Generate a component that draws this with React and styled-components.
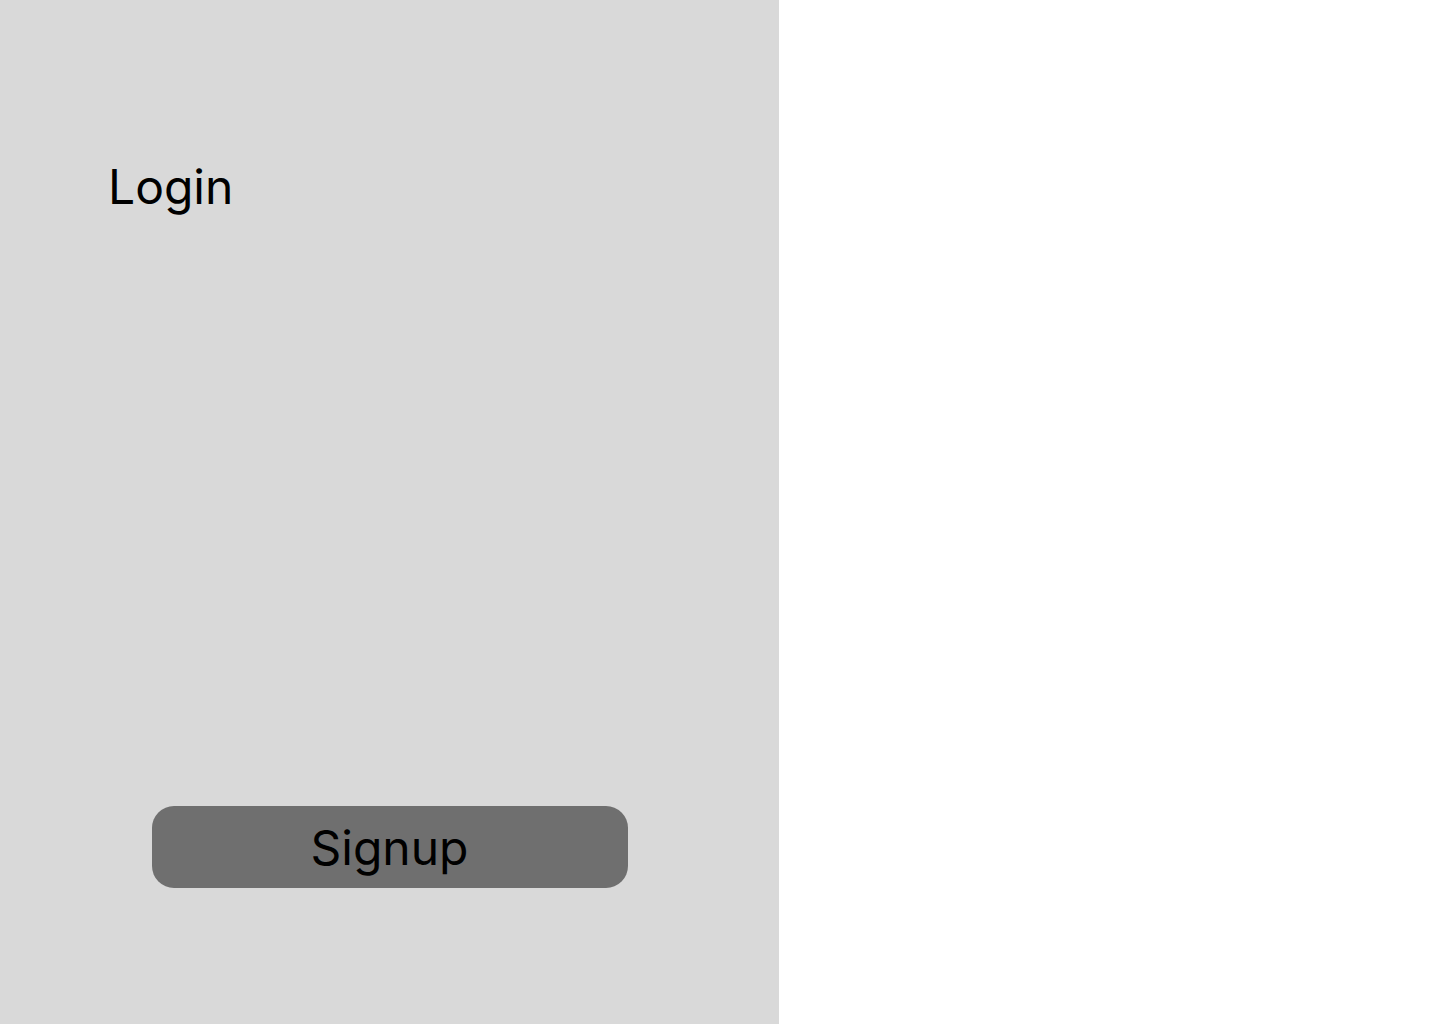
import React from 'react'
import styled, { createGlobalStyle } from 'styled-components'

const GlobalStyle = createGlobalStyle`
  * { box-sizing: border-box; }
  body {
    margin: 0;
    font-family: Inter, "Noto Sans", sans-serif;
    background: #fff;
  }
`

const Page = styled.div`
  display: flex;
  width: 100%;
  height: 100vh;
  min-height: 1024px;
  background: #ffffff;
`

const Panel = styled.section`
  display: flex;
  flex-direction: column;
  width: 779px;
  height: 100%;
  padding: 158px 0 136px;
  background: #d9d9d9;
`

const Title = styled.h1`
  margin: 0 0 0 108px;
  font-size: 48px;
  font-weight: 400;
  line-height: 58px;
  color: #000;
`

const Button = styled.button`
  align-self: center;
  margin-top: auto;
  width: 476px;
  height: 82px;
  border: none;
  border-radius: 22px;
  background: ${p => p.bg || '#6f6f6f'};
  color: #000;
  font-family: Inter, "Noto Sans", sans-serif;
  font-size: 48px;
  font-weight: 400;
  cursor: pointer;
`

export default function App() {
  return (
    <>
      <GlobalStyle />
      <Page>
        <Panel>
          <Title>Login</Title>
          <Button>Signup</Button>
        </Panel>
      </Page>
    </>
  )
}
